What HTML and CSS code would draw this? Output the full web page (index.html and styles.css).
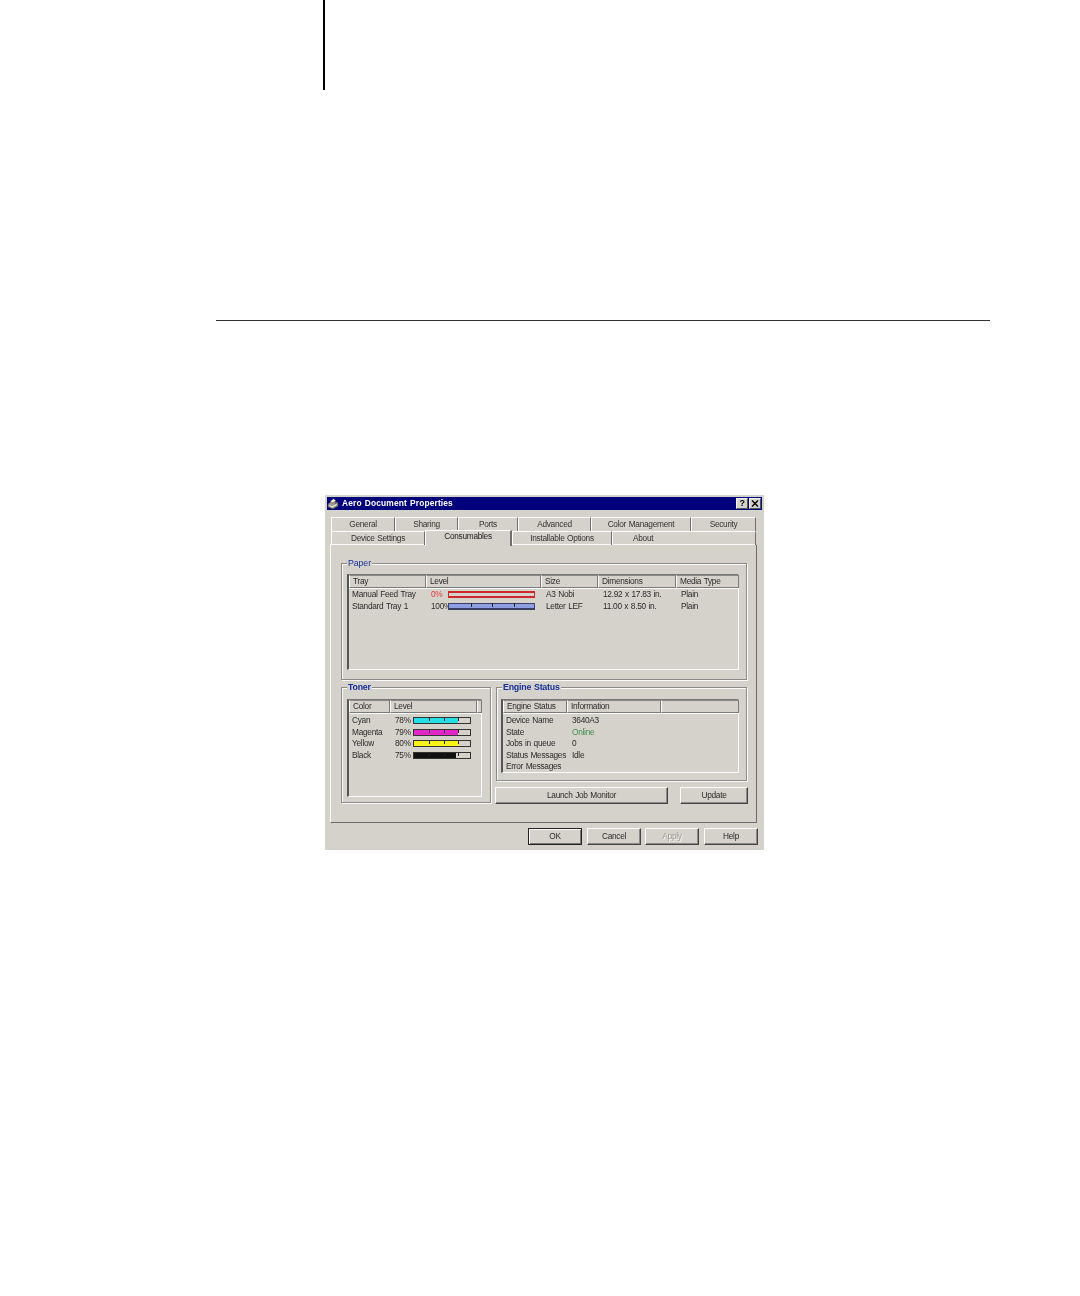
FILE: index.html
```html
<!DOCTYPE html>
<html lang="en">
<head>
<meta charset="utf-8">
<title>Aero Document Properties</title>
<link rel="stylesheet" href="styles.css">
</head>
<body>
<div class="page">
  <div class="margin-line"></div>
  <div class="rule"></div>
  <div class="dialog">
    <div class="titlebar">
      <svg class="app-icon" viewBox="0 0 12 12" width="12" height="12">
        <path d="M1 6 L6 2 L11 5 L11 8 L6 11 L1 9 Z" fill="#9d9a93" stroke="#45423c" stroke-width=".7"/>
        <path d="M3 3.5 L6.5 .8 L9 2.5 L6 5 Z" fill="#f4f2ee" stroke="#45423c" stroke-width=".5"/>
        <path d="M2.5 7.5 L5 9 L9.5 6.5" fill="none" stroke="#fff" stroke-width="1"/>
        <circle cx="8.5" cy="5" r=".8" fill="#7d2f2f"/>
      </svg>
      <span class="title-text">Aero Document Properties</span>
      <span class="cap-btn cap-help">?</span>
      <span class="cap-btn cap-close">
        <svg viewBox="0 0 8 7" width="8" height="7"><path d="M1 .5 L7 6.5 M7 .5 L1 6.5" stroke="#000" stroke-width="1.4"/></svg>
      </span>
    </div>

    <div class="tabs tabs-back">
      <div class="tab t64">General</div>
      <div class="tab t63">Sharing</div>
      <div class="tab t60">Ports</div>
      <div class="tab t73">Advanced</div>
      <div class="tab t100">Color Management</div>
      <div class="tab t65">Security</div>
    </div>
    <div class="tabs tabs-front">
      <div class="tab t94">Device Settings</div>
      <div class="tab t87 active">Consumables</div>
      <div class="tab t100">Installable Options</div>
      <div class="tab t144 tab-about">About</div>
    </div>

    <div class="panel">
      <section class="group group-paper">
        <h2 class="legend">Paper</h2>
        <div class="list list-paper">
          <div class="row head cols-paper">
            <span class="hcell">Tray</span><span class="hcell">Level</span><span class="hcell">Size</span><span class="hcell">Dimensions</span><span class="hcell">Media Type</span>
          </div>
          <div class="row cols-paper">
            <span class="cell">Manual Feed Tray</span>
            <span class="cell level"><span class="pct pct-red">0%</span><span class="bar bar-red"><i class="fill" style="width:0%"></i></span></span>
            <span class="cell">A3 Nobi</span><span class="cell">12.92 x 17.83 in.</span><span class="cell">Plain</span>
          </div>
          <div class="row cols-paper">
            <span class="cell">Standard Tray 1</span>
            <span class="cell level"><span class="pct">100%</span><span class="bar bar-blue"><i class="fill" style="width:100%"></i></span></span>
            <span class="cell">Letter LEF</span><span class="cell">11.00 x 8.50 in.</span><span class="cell">Plain</span>
          </div>
        </div>
      </section>

      <div class="lower">
        <section class="group group-toner">
          <h2 class="legend legend-bold">Toner</h2>
          <div class="list list-toner">
            <div class="row head cols-toner">
              <span class="hcell">Color</span><span class="hcell">Level</span><span class="hcell"></span>
            </div>
            <div class="row cols-toner"><span class="cell">Cyan</span><span class="cell level"><span class="pct">78%</span><span class="bar bar-cyan"><i class="fill" style="width:78%"></i></span></span></div>
            <div class="row cols-toner"><span class="cell">Magenta</span><span class="cell level"><span class="pct">79%</span><span class="bar bar-magenta"><i class="fill" style="width:79%"></i></span></span></div>
            <div class="row cols-toner"><span class="cell">Yellow</span><span class="cell level"><span class="pct">80%</span><span class="bar bar-yellow"><i class="fill" style="width:80%"></i></span></span></div>
            <div class="row cols-toner"><span class="cell">Black</span><span class="cell level"><span class="pct">75%</span><span class="bar bar-black"><i class="fill" style="width:75%"></i></span></span></div>
          </div>
        </section>

        <div class="right-col">
          <section class="group group-engine">
            <h2 class="legend legend-bold">Engine Status</h2>
            <div class="list list-engine">
              <div class="row head cols-engine">
                <span class="hcell">Engine Status</span><span class="hcell">Information</span><span class="hcell"></span>
              </div>
              <div class="row cols-engine"><span class="cell">Device Name</span><span class="cell">3640A3</span></div>
              <div class="row cols-engine"><span class="cell">State</span><span class="cell online">Online</span></div>
              <div class="row cols-engine"><span class="cell">Jobs in queue</span><span class="cell">0</span></div>
              <div class="row cols-engine"><span class="cell">Status Messages</span><span class="cell">Idle</span></div>
              <div class="row cols-engine"><span class="cell">Error Messages</span><span class="cell"></span></div>
            </div>
          </section>
          <div class="actions">
            <button class="btn btn-launch">Launch Job Monitor</button>
            <button class="btn btn-update">Update</button>
          </div>
        </div>
      </div>
    </div>

    <div class="footer">
      <button class="btn btn-foot btn-default">OK</button>
      <button class="btn btn-foot">Cancel</button>
      <button class="btn btn-foot btn-disabled">Apply</button>
      <button class="btn btn-foot">Help</button>
    </div>
  </div>
</div>
</body>
</html>
```
FILE: styles.css
```css
* { box-sizing: border-box; }
html, body { margin: 0; padding: 0; background: #fff; }
.page { width: 1080px; height: 1296px; overflow: hidden; }
.margin-line { width: 2px; height: 90px; margin-left: 323px; background: #000; }
.rule { width: 774px; height: 1px; margin: 230px 0 0 216px; background: #333; }

.dialog {
  width: 439px; height: 355px; margin: 174px 0 0 325px;
  padding: 2px 0 0 2px;
  background: #d5d2cb;
  font: 8.3px/11.5px "Liberation Sans", Arial, sans-serif;
  letter-spacing: -.28px;
  word-spacing: .6px;
  color: #2b2b2b;
  filter: blur(.4px);
}
.titlebar {
  width: 435px; height: 13px; background: #00007c; color: #fff;
  display: flex; align-items: center; padding: 0 1px 0 0;
}
.app-icon { flex: none; margin-right: 3px; }
.title-text { font-weight: bold; font-size: 8.4px; letter-spacing: .15px; flex: 1; }
.cap-btn {
  width: 12px; height: 11px; display: flex; align-items: center; justify-content: center;
  background: #d5d2cb; color: #000; font-weight: bold; font-size: 9px; line-height: 9px;
  border: 1px solid; border-color: #f4f4f4 #555 #555 #f4f4f4;
}
.cap-help { margin-right: 1px; }

.tabs { display: flex; margin-left: 4px; }
.tabs-back { margin-top: 7px; height: 14px; }
.tabs-front { height: 14px; position: relative; z-index: 2; }
.tab {
  text-align: center; padding-top: 1px; color: #333;
  border-top: 1px solid #fff; border-left: 1px solid #fff; border-right: 1px solid #6f6f6f;
}
.tab.active {
  margin-top: -1px; height: 16px; padding-top: 0; background: #d5d2cb; color: #222;
  border-right: 2px solid #6f6f6f;
}
.tab-about { text-align: left; padding-left: 20px; }
.t60 { width: 60px; } .t63 { width: 63px; } .t64 { width: 64px; } .t65 { width: 65px; }
.t73 { width: 73px; } .t87 { width: 87px; } .t94 { width: 94px; }
.t100 { width: 100px; } .t144 { width: 144px; }

.panel {
  width: 427px; height: 279px; margin-left: 3px; margin-top: -1px;
  padding: 18px 0 0 10px;
  border: 1px solid; border-color: #fbfbfb #6c6c6c #6c6c6c #fbfbfb;
}

.group {
  position: relative;
  border: 1px solid #8a8a8a;
  box-shadow: 1px 1px 0 #fbfbfb, inset 1px 1px 0 #fbfbfb;
}
.legend {
  position: absolute; left: 5px; top: -6px; margin: 0; padding: 0 1px;
  background: #d5d2cb; color: #17309a; font: inherit; font-size: 8.8px; letter-spacing: -.1px;
}
.legend-bold { font-weight: bold; letter-spacing: -.2px; }
.group-paper { width: 406px; height: 117px; padding: 10px 0 0 5px; }
.lower { display: grid; grid-template-columns: 150px 253px; column-gap: 4px; margin-top: 7px; }
.group-toner { width: 150px; height: 116px; padding: 11px 0 0 5px; }
.right-col { display: flex; flex-direction: column; }
.group-engine { width: 251px; margin-left: 1px; height: 94px; padding: 11px 0 0 4px; }

.list {
  border: 1px solid; border-color: #777 #fbfbfb #fbfbfb #555;
  border-left-width: 2px;
}
.list-paper { width: 392px; height: 96px; }
.list-toner { width: 135px; height: 98px; }
.list-engine { width: 238px; height: 74px; }

.row { display: grid; height: 11.5px; }
.row.head { height: 14px; margin-bottom: 0; border-bottom: 1px solid #fbfbfb; }
.list-toner .row.head, .list-engine .row.head { margin-bottom: 1px; }
.cols-paper { grid-template-columns: 77px 115px 57px 78px 63px; }
.cols-toner { grid-template-columns: 41px 87px 5px; }
.cols-engine { grid-template-columns: 64px 94px 78px; }
.hcell {
  padding: 0 0 0 3px; height: 13px; white-space: nowrap;
  border: 1px solid; border-color: #fbfbfb #7a7a7a #7a7a7a #fbfbfb;
  border-top-color: #8a8a8a;
}
.cell { padding-left: 3px; white-space: nowrap; }
.cols-paper .cell + .cell, .cols-toner .cell + .cell, .cols-engine .cell + .cell { padding-left: 5px; }
.online { color: #3f8f52; }

.level { display: flex; align-items: center; }
.pct { width: 18px; flex: none; }
.pct-red { color: #e03a3a; }
.cols-paper .bar { width: 87px; margin-left: -1px; }
.cols-toner .bar { width: 58px; }
.bar {
  position: relative; height: 7px; flex: none;
  border: 1px solid #333; background: #d5d2cb;
}
.fill { display: block; height: 100%; }
.bar::after {
  content: ""; position: absolute; left: 0; right: 0; top: -1px; height: 4px;
  background: linear-gradient(#222, #222) 27% 0 / 1px 100% no-repeat,
              linear-gradient(#222, #222) 54% 0 / 1px 100% no-repeat,
              linear-gradient(#222, #222) 80% 0 / 1px 100% no-repeat;
}
.cols-paper .bar::after {
  background: linear-gradient(#222, #222) 26% 0 / 1px 100% no-repeat,
              linear-gradient(#222, #222) 51% 0 / 1px 100% no-repeat,
              linear-gradient(#222, #222) 77% 0 / 1px 100% no-repeat;
}
.bar-red { border-color: #cc2a2a; border-width: 2px 1px; }
.bar-red::after { display: none; }
.bar-blue { border-color: #3a3f63; border-bottom-width: 2px; }
.bar-blue .fill { background: #8d9fe2; }
.bar-cyan .fill { background: #23dfe6; }
.bar-magenta .fill { background: #e427c9; }
.bar-yellow .fill { background: #f8f41a; }
.bar-black .fill { background: #111; }

.btn {
  display: block; margin: 0; padding: 0;
  font: inherit; letter-spacing: inherit; word-spacing: inherit; color: #2b2b2b; text-align: center;
  background: #d5d2cb; border: 1px solid;
  border-color: #fbfbfb #444 #444 #fbfbfb;
  box-shadow: inset -1px -1px 0 #8a8a8a;
}
.actions { display: flex; justify-content: space-between; margin-top: 6px; }
.btn-launch { width: 173px; height: 17px; }
.btn-update { width: 68px; height: 17px; }
.footer { display: flex; gap: 5px; margin: 5px 0 0 201px; }
.btn-foot { width: 54px; height: 17px; }
.btn-default { border-color: #222; box-shadow: inset 1px 1px 0 #fbfbfb, inset -1px -1px 0 #777; }
.btn-disabled { margin-left: -1px; color: #9a9a94; text-shadow: 1px 1px 0 #f4f4f4; }
```
